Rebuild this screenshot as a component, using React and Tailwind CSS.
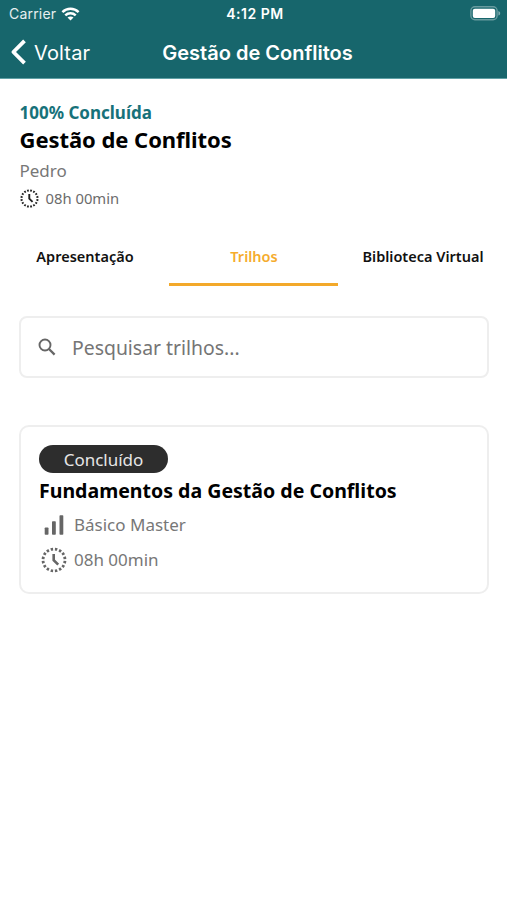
import { useState } from 'react';

const tabs = ['Apresentação', 'Trilhos', 'Biblioteca Virtual'];

const WifiIcon = () => (
  <svg width="19" height="14" viewBox="0 0 18 14" fill="none" stroke="white" strokeWidth="2.5">
    <path d="M0.9 5.1C5.5 0.7 12.5 0.7 17.1 5.1" />
    <path d="M3.8 8.3C6.7 5.5 11.3 5.5 14.2 8.3" />
    <path d="M9 13.6L6 10.6C7.7 9.1 10.3 9.1 12 10.6Z" fill="white" stroke="none" />
  </svg>
);

const BatteryIcon = () => (
  <svg width="31" height="15" viewBox="0 0 31 15" fill="none">
    <rect x="0.9" y="0.8" width="26.2" height="13" rx="4" stroke="white" strokeOpacity="0.35" strokeWidth="1.4" />
    <rect x="2.8" y="2.7" width="22.4" height="9.2" rx="2" fill="white" />
    <path d="M28.4 5V9.6C30.8 8.7 30.8 5.9 28.4 5Z" fill="white" fillOpacity="0.45" />
  </svg>
);

const ClockIcon = ({ size, className }) => (
  <svg width={size} height={size} viewBox="0 0 26 26" fill="none" stroke="currentColor" className={className}>
    <circle cx="13" cy="13" r="11" strokeWidth="2.8" pathLength="160" strokeDasharray="5.6 4.4" strokeDashoffset="-2.2" />
    <path d="M12.7 7V13.2L17.2 17.7" strokeWidth="2.6" />
  </svg>
);

const LevelIcon = () => (
  <svg width="20" height="20" viewBox="0 0 20 20" fill="currentColor" className="text-[#666666]">
    <rect x="0.7" y="12.4" width="3.8" height="7.4" rx="0.8" />
    <rect x="8" y="6.3" width="3.8" height="13.5" rx="0.8" />
    <rect x="15.5" y="0.3" width="3.8" height="19.5" rx="0.8" />
  </svg>
);

const Header = () => (
  <header className="h-[79px] bg-[#17666c] border-b border-[#5fa0a5] text-white font-['Inter',sans-serif]">
    <div className="grid grid-cols-3 items-center h-[27px] pl-[9px] pr-[6px]">
      <div className="flex items-center gap-[5px] text-[14px] tracking-[0.2px] text-white/90">
        <span>Carrier</span>
        <WifiIcon />
      </div>
      <span className="text-center text-[14px] font-semibold tracking-[0.5px]">4:12 PM</span>
      <div className="flex justify-end">
        <BatteryIcon />
      </div>
    </div>
    <div className="grid grid-cols-[1fr_auto_1fr] items-center h-[51px] pl-[10px] pr-[2px]">
      <button className="flex items-center gap-[8px] text-[20px]">
        <svg width="16" height="26" viewBox="0 0 16 26" fill="none" stroke="white" strokeWidth="3.8" strokeLinejoin="round" className="-mt-px">
          <path d="M14.5 1.8L3.4 13L14.5 24.2" />
        </svg>
        <span className="tracking-[0.15px]">Voltar</span>
      </button>
      <h1 className="text-[20px] font-semibold">Gestão de Conflitos</h1>
      <span />
    </div>
  </header>
);

export default function App() {
  const [active, setActive] = useState('Trilhos');

  return (
    <div className="min-h-screen bg-white font-['Noto_Sans',sans-serif] text-black">
      <Header />

      <section className="px-[19.5px] pt-[22px]">
        <p className="text-[17px] leading-[24px] font-bold text-[#17727a]">100% Concluída</p>
        <h2 className="text-[22px] leading-[28px] font-bold tracking-[-0.05px]">Gestão de Conflitos</h2>
        <p className="mt-[6px] text-[17px] leading-[24px] text-[#777777]">Pedro</p>
        <div className="mt-[5px] flex items-center gap-[7px] h-[20px]">
          <ClockIcon size={19} className="text-[#222222]" />
          <span className="text-[14.8px] text-[#6c6c6c]">08h 00min</span>
        </div>
      </section>

      <nav className="mt-[22px] grid grid-cols-3">
        {tabs.map((tab) => (
          <button
            key={tab}
            onClick={() => setActive(tab)}
            className={`h-[56px] pl-[1px] border-b-[3px] text-[14.5px] font-semibold whitespace-nowrap ${
              active === tab ? 'border-[#f3a92a] text-[#f5ac2c]' : 'border-transparent text-[#111111]'
            }`}
          >
            {tab}
          </button>
        ))}
      </nav>

      <main className="pl-[19px] pr-[18px]">
        <label className="mt-[30px] flex items-center h-[62px] rounded-[8px] border-2 border-[#eeeeee] pl-[17px] gap-[16px]">
          <svg width="18" height="18" viewBox="0 0 18 18" fill="none" stroke="#666666" strokeWidth="1.9">
            <circle cx="7" cy="7" r="5.5" />
            <path d="M11 11L16.6 16.6" strokeWidth="2.3" />
          </svg>
          <input
            placeholder="Pesquisar trilhos..."
            className="flex-1 pt-[2px] text-[19.4px] outline-none placeholder:text-[#757575]"
          />
        </label>

        <article className="mt-[47px] h-[169px] rounded-[10px] border-2 border-[#eeeeee] px-[18px] pt-[18px]">
          <span className="flex items-center justify-center w-[129px] h-[28px] pt-[1px] rounded-full bg-[#2d2d2d] text-[17px] text-[#e6e6e6]">
            Concluído
          </span>
          <h3 className="mt-[4px] text-[19.55px] leading-[28px] font-bold">Fundamentos da Gestão de Conflitos</h3>
          <div className="mt-[6px] flex items-center h-[28px] text-[17px] text-[#777777]">
            <span className="flex justify-center w-[30px] mr-[5px]">
              <LevelIcon />
            </span>
            Básico Master
          </div>
          <div className="mt-[7px] flex items-center h-[28px] text-[17px] text-[#777777]">
            <span className="flex justify-center w-[29px] mr-[6px]">
              <ClockIcon size={26} className="text-[#666666]" />
            </span>
            08h 00min
          </div>
        </article>
      </main>
    </div>
  );
}
